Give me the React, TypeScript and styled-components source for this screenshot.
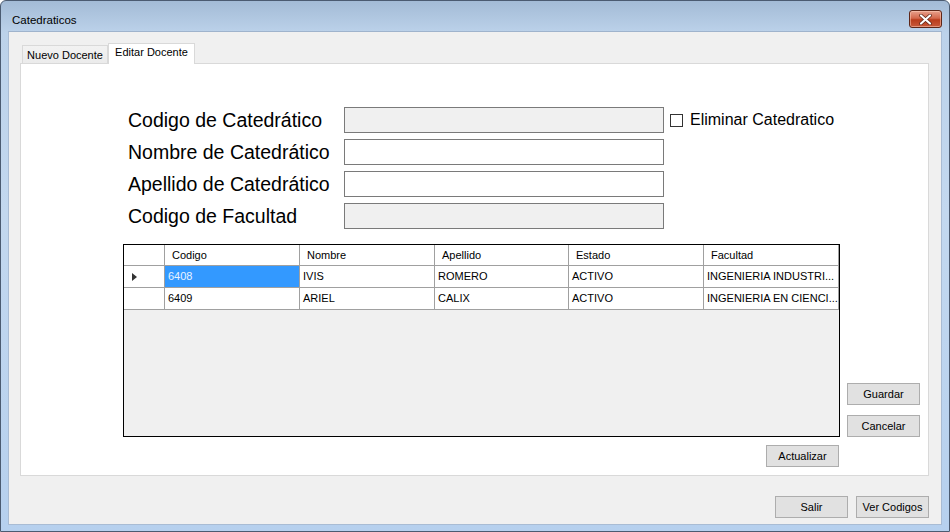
import React from "react";
import styled, { createGlobalStyle } from "styled-components";

const GlobalStyle = createGlobalStyle`
  html, body { margin: 0; padding: 0; background: #ffffff; }
  body { font-family: "Liberation Sans", Arial, sans-serif; }
  * { box-sizing: border-box; }
`;

const Window = styled.div`
  width: 950px;
  height: 532px;
  display: flex;
  flex-direction: column;
  border: 1px solid #4b5b71;
  border-radius: 6px 6px 0 0;
  background: linear-gradient(180deg, #a3bbd6 0%, #bcd2ea 6%, #c3d8ef 40%, #b6d0ee 100%);
  padding: 0 7px 6px 7px;
`;

const TitleBar = styled.div`
  height: 30px;
  display: flex;
  align-items: flex-start;
  justify-content: space-between;
  padding: 8px 0 0 4px;
`;

const Title = styled.div`
  font-size: 11.5px;
  line-height: 18px;
  padding-top: 2px;
  color: #000;
`;

const CloseButton = styled.div`
  width: 33px;
  height: 18px;
  margin-top: 1px;
  border: 1px solid #5e2618;
  border-radius: 3px;
  background: linear-gradient(180deg, #e8a08c 0%, #d4684c 45%, #b93c1c 55%, #c8593a 100%);
  display: flex;
  align-items: center;
  justify-content: center;
  box-shadow: inset 0 0 0 1px rgba(255, 210, 190, 0.5);
`;

const Client = styled.div`
  flex: 1;
  background: #f0f0f0;
  border: 1px solid #a9bcd4;
  border-top-color: #9fb3cc;
  padding: 11px 12px 0 11px;
  display: flex;
  flex-direction: column;
`;

const TabStrip = styled.div`
  display: flex;
  align-items: flex-end;
  height: 21px;
  margin-bottom: -1px;
  padding-left: 2px;
`;

const Tab = styled.div<{ $active?: boolean }>`
  position: relative;
  z-index: ${(p) => (p.$active ? 2 : 1)};
  width: ${(p) => (p.$active ? 87 : 86)}px;
  height: ${(p) => (p.$active ? 21 : 19)}px;
  border: 1px solid #d9d9d9;
  border-bottom: ${(p) => (p.$active ? "none" : "1px solid #d9d9d9")};
  margin-left: ${(p) => (p.$active ? 0 : 0)}px;
  background: ${(p) => (p.$active ? "#ffffff" : "linear-gradient(180deg, #f2f2f2, #ebebeb)")};
  font-size: 11px;
  line-height: ${(p) => (p.$active ? 17 : 19)}px;
  text-align: center;
  color: #000;
  white-space: nowrap;
`;

const Panel = styled.div`
  height: 413px;
  background: #ffffff;
  border: 1px solid #d9d9d9;
  padding: 43px 0 0 102px;
  display: flex;
  flex-direction: column;
`;

const Form = styled.div`
  margin-left: 5px;
  display: grid;
  grid-template-columns: 216px 320px auto;
  grid-auto-rows: 26px;
  row-gap: 6px;
  align-items: center;
`;

const FieldLabel = styled.div`
  font-size: 19.5px;
  color: #000;
  line-height: 26px;
  white-space: nowrap;
`;

const TextBox = styled.div<{ $disabled?: boolean }>`
  height: 26px;
  border: 1px solid #7a7a7a;
  background: ${(p) => (p.$disabled ? "#f0f0f0" : "#ffffff")};
`;

const CheckWrap = styled.label`
  display: flex;
  align-items: center;
  gap: 7px;
  margin-left: 6px;
  font-size: 16px;
  color: #000;
  white-space: nowrap;
`;

const CheckBox = styled.span`
  width: 13px;
  height: 13px;
  border: 1px solid #333;
  background: #fff;
  display: inline-block;
`;

const GridRow = styled.div`
  margin-top: 15px;
  display: flex;
  align-items: flex-end;
  gap: 7px;
`;

const GridColumn = styled.div`
  display: flex;
  flex-direction: column;
  align-items: flex-end;
  gap: 8px;
`;

const DataGrid = styled.div`
  width: 717px;
  height: 193px;
  border: 1px solid #000;
  background: #f0f0f0;
`;

const GridLine = styled.div<{ $header?: boolean }>`
  display: grid;
  grid-template-columns: 41px 135px 135px 134px 135px 135px;
  height: ${(p) => (p.$header ? 21 : 22)}px;
`;

const Cell = styled.div<{ $header?: boolean; $selected?: boolean; $rowHead?: boolean }>`
  border-right: 1px solid #a0a0a0;
  border-bottom: 1px solid #a0a0a0;
  background: ${(p) => (p.$selected ? "#3399ff" : "#ffffff")};
  color: ${(p) => (p.$selected ? "#e8f2ff" : "#000")};
  font-size: 11px;
  line-height: ${(p) => (p.$header ? 20 : 21)}px;
  padding-left: ${(p) => (p.$header ? 7 : 3)}px;
  white-space: nowrap;
  overflow: hidden;
  display: ${(p) => (p.$rowHead ? "flex" : "block")};
  align-items: center;
`;

const RowArrow = styled.span`
  width: 0;
  height: 0;
  margin-left: 5px;
  border-top: 4px solid transparent;
  border-bottom: 4px solid transparent;
  border-left: 5px solid #333;
`;

const ButtonStack = styled.div`
  display: flex;
  flex-direction: column;
  gap: 10px;
`;

const Button = styled.button`
  width: 73px;
  height: 22px;
  margin: 0;
  padding: 0;
  border: 1px solid #adadad;
  background: #e1e1e1;
  font-family: "Liberation Sans", Arial, sans-serif;
  font-size: 11px;
  color: #000;
  line-height: 20px;
`;

const RightAligned = styled.div`
  margin-right: 1px;
`;

const Footer = styled.div`
  margin-top: 20px;
  display: flex;
  justify-content: flex-end;
  gap: 8px;
`;

const rows = [
  { codigo: "6408", nombre: "IVIS", apellido: "ROMERO", estado: "ACTIVO", facultad: "INGENIERIA INDUSTRI..." },
  { codigo: "6409", nombre: "ARIEL", apellido: "CALIX", estado: "ACTIVO", facultad: "INGENIERIA EN CIENCI..." },
];

export default function App() {
  return (
    <>
      <GlobalStyle />
      <Window>
        <TitleBar>
          <Title>Catedraticos</Title>
          <CloseButton>
            <svg width="13" height="11" viewBox="0 0 13 11">
              <path d="M2 1.5 L11 9.5 M11 1.5 L2 9.5" stroke="#5a2214" strokeWidth="3.6" strokeLinecap="round" />
              <path d="M2 1.5 L11 9.5 M11 1.5 L2 9.5" stroke="#ffffff" strokeWidth="2.2" strokeLinecap="round" />
            </svg>
          </CloseButton>
        </TitleBar>
        <Client>
          <TabStrip>
            <Tab>Nuevo Docente</Tab>
            <Tab $active>Editar Docente</Tab>
          </TabStrip>
          <Panel>
            <Form>
              <FieldLabel>Codigo de Catedrático</FieldLabel>
              <TextBox $disabled />
              <CheckWrap>
                <CheckBox />
                Eliminar Catedratico
              </CheckWrap>
              <FieldLabel>Nombre de Catedrático</FieldLabel>
              <TextBox />
              <span />
              <FieldLabel>Apellido de Catedrático</FieldLabel>
              <TextBox />
              <span />
              <FieldLabel>Codigo de Facultad</FieldLabel>
              <TextBox $disabled />
              <span />
            </Form>
            <GridRow>
              <GridColumn>
                <DataGrid>
                  <GridLine $header>
                    <Cell $header />
                    <Cell $header>Codigo</Cell>
                    <Cell $header>Nombre</Cell>
                    <Cell $header>Apellido</Cell>
                    <Cell $header>Estado</Cell>
                    <Cell $header>Facultad</Cell>
                  </GridLine>
                  {rows.map((r, i) => (
                    <GridLine key={r.codigo}>
                      <Cell $rowHead>{i === 0 ? <RowArrow /> : null}</Cell>
                      <Cell $selected={i === 0}>{r.codigo}</Cell>
                      <Cell>{r.nombre}</Cell>
                      <Cell>{r.apellido}</Cell>
                      <Cell>{r.estado}</Cell>
                      <Cell>{r.facultad}</Cell>
                    </GridLine>
                  ))}
                </DataGrid>
              </GridColumn>
              <ButtonStack>
                <Button>Guardar</Button>
                <Button>Cancelar</Button>
              </ButtonStack>
            </GridRow>
            <GridRowBelow />
          </Panel>
          <Footer>
            <Button>Salir</Button>
            <Button>Ver Codigos</Button>
          </Footer>
        </Client>
      </Window>
    </>
  );
}

const BelowWrap = styled.div`
  width: 717px;
  margin-top: 8px;
  display: flex;
  justify-content: flex-end;
`;

function GridRowBelow() {
  return (
    <BelowWrap>
      <RightAligned>
        <Button>Actualizar</Button>
      </RightAligned>
    </BelowWrap>
  );
}
